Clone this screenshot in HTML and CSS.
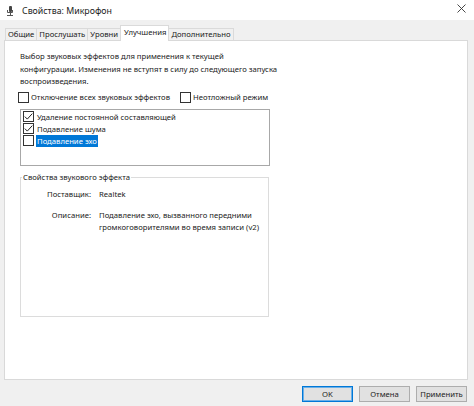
FILE: index.html
```html
<!DOCTYPE html>
<html lang="ru">
<head>
<meta charset="utf-8">
<link rel="stylesheet" href="styles.css">
</head>
<body>
<div class="window">
  <div class="titlebar">
    <svg class="appicon" width="8" height="10" viewBox="0 0 8 10"><rect x="3" y="0" width="3" height="6" rx="1" fill="#444"/><path d="M1.5 4 V6.5 H6.5 V4" fill="none" stroke="#555" stroke-width="1"/><rect x="4" y="7" width="1" height="2" fill="#555"/><rect x="1" y="9" width="6" height="1" fill="#555"/></svg>
    <span class="title">Свойства: Микрофон</span>
    <svg class="close" width="9" height="9" viewBox="0 0 9 9"><path d="M0.5 0.5 L8.5 8.5 M8.5 0.5 L0.5 8.5" stroke="#333" stroke-width="0.9"/></svg>
  </div>
  <div class="tabs">
    <div class="tab">Общие</div>
    <div class="tab">Прослушать</div>
    <div class="tab">Уровни</div>
    <div class="tab active">Улучшения</div>
    <div class="tab last">Дополнительно</div>
  </div>
  <div class="panel">
    <p class="intro">Выбор звуковых эффектов для применения к текущей<br>конфигурации. Изменения не вступят в силу до следующего запуска<br>воспроизведения.</p>
    <div class="checkrow">
      <label class="check"><span class="box"></span>Отключение всех звуковых эффектов</label>
      <label class="check"><span class="box"></span>Неотложный режим</label>
    </div>
    <div class="listbox">
      <div class="item"><span class="box"><svg width="9" height="9" viewBox="0 0 9 9"><path d="M0.8 4.6 L3.3 7.1 L8.3 1.6" fill="none" stroke="#222" stroke-width="1"/></svg></span><span class="label">Удаление постоянной составляющей</span></div>
      <div class="item"><span class="box"><svg width="9" height="9" viewBox="0 0 9 9"><path d="M0.8 4.6 L3.3 7.1 L8.3 1.6" fill="none" stroke="#222" stroke-width="1"/></svg></span><span class="label">Подавление шума</span></div>
      <div class="item"><span class="box"></span><span class="label selected">Подавление эхо</span></div>
    </div>
    <fieldset class="group">
      <legend>Свойства звукового эффекта</legend>
      <div class="prop"><span class="key">Поставщик:</span><span class="val">Realtek</span></div>
      <div class="prop desc"><span class="key">Описание:</span><span class="val">Подавление эхо, вызванного передними<br>громкоговорителями во время записи (v2)</span></div>
    </fieldset>
  </div>
  <div class="footer">
    <button class="btn default">OK</button>
    <button class="btn">Отмена</button>
    <button class="btn">Применить</button>
  </div>
</div>
</body>
</html>
```
FILE: styles.css
```css
* { box-sizing: border-box; }
html, body { margin: 0; padding: 0; }
body {
  width: 474px;
  height: 406px;
  overflow: hidden;
  background: #f0f0f0;
  font-family: "Noto Sans", "DejaVu Sans", sans-serif;
  font-size: 7.7px;
  color: #1a1a1a;
}
.window { width: 474px; height: 406px; display: flex; flex-direction: column; }
.titlebar {
  height: 20px;
  flex: none;
  background: #fff;
  display: flex;
  align-items: center;
  padding-left: 6px;
}
.appicon { margin-right: 8px; margin-top: 2px; }
.title { font-size: 8.8px; color: #222; flex: 1; margin-top: 1px; }
.close { margin-right: 8px; margin-top: -3px; }
.tabs {
  height: 20px;
  flex: none;
  display: flex;
  align-items: flex-end;
  padding-left: 5px;
  position: relative;
  z-index: 1;
}
.tab {
  height: 12px;
  padding: 0 2px;
  line-height: 11px;
  border: 1px solid #dadada;
  border-bottom: none;
  border-right: none;
  background: #f0f0f0;
}
.tab.last { border-right: 1px solid #dadada; }
.tab.active {
  height: 16px;
  background: #fff;
  padding: 0 2px 0 3px;
  line-height: 12px;
  margin-bottom: -1px;
  border-right: 1px solid #dadada;
}
.tab.active + .tab { border-left: none; }
.panel {
  flex: none;
  margin: 0 6px 0 4px;
  height: 340px;
  background: #fff;
  border: 1px solid #d9d9d9;
  padding: 9px 0 0 15px;
}
.intro { margin: 0; line-height: 12.5px; white-space: nowrap; }
.checkrow { display: flex; gap: 10px; margin-top: 4px; margin-left: -2px; height: 11px; }
.check { display: flex; align-items: center; }
.box {
  flex: none;
  width: 11px; height: 11px;
  border: 1px solid #333;
  background: #fff;
  margin-right: 2px;
  display: inline-flex;
  align-items: center;
  justify-content: center;
}
.listbox {
  margin-top: 6px;
  width: 250px;
  height: 57px;
  border: 1px solid #a8a8a8;
  padding: 1px 0 0 2px;
}
.item { display: flex; align-items: center; height: 12px; }
.item .box { margin-right: 2px; }
.label { padding: 0 1px; line-height: 12px; }
.label.selected { background: #0078d7; color: #fff; }
.group {
  margin: 6px 0 0 0;
  width: 249px;
  height: 145px;
  border: 1px solid #dcdcdc;
  padding: 5px 0 0 0;
}
.group legend { padding: 0 1px; margin-left: 1px; line-height: 11px; }
.prop { display: flex; line-height: 12px; }
.prop .key { width: 78px; text-align: right; padding-right: 8px; flex: none; }
.prop .val { white-space: nowrap; }
.prop.desc { margin-top: 9px; }
.footer {
  flex: 1;
  display: flex;
  justify-content: flex-end;
  align-items: flex-start;
  gap: 6px;
  padding: 6px 7px 0 0;
}
.btn {
  width: 51px;
  height: 16px;
  font: inherit;
  color: #222;
  background: #e1e1e1;
  border: 1px solid #adadad;
  padding: 0;
}
.btn.default { border: 1px solid #0078d7; box-shadow: inset 0 0 0 1px #6cb0e8; }
```
